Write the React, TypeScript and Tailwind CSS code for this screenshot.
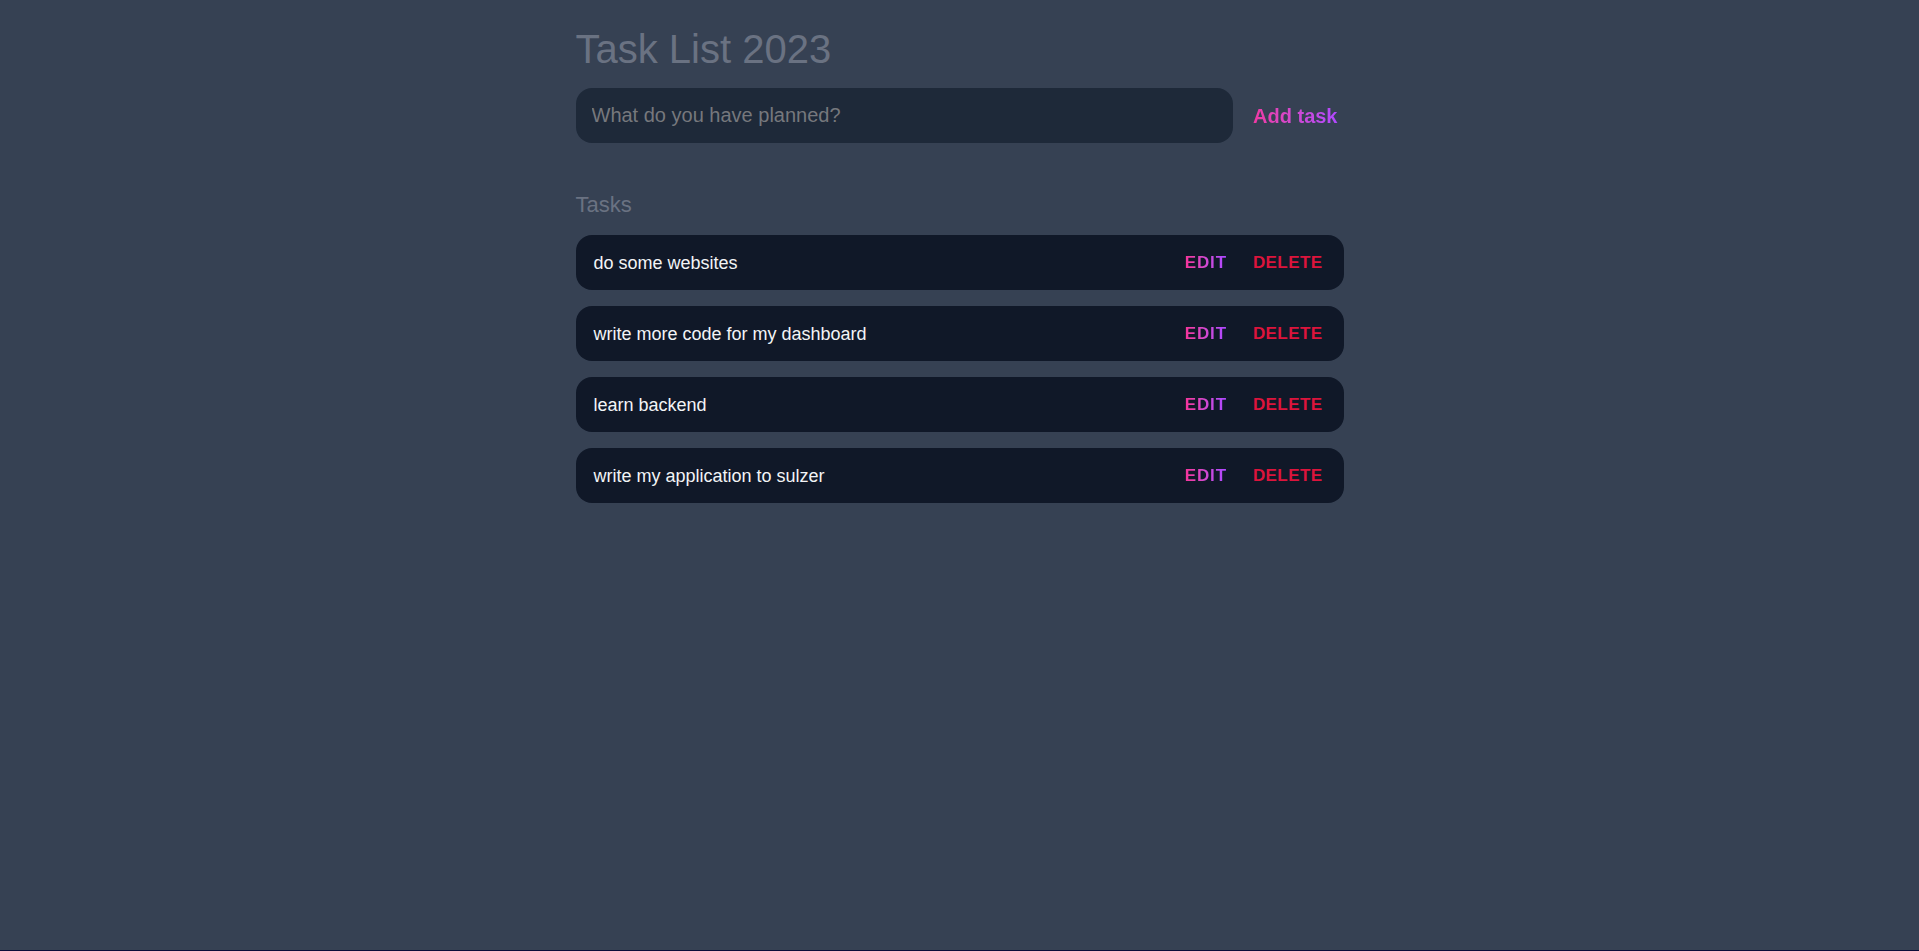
import React, { useState } from 'react';

interface Task {
  id: number;
  text: string;
}

const initialTasks: Task[] = [
  { id: 1, text: 'do some websites' },
  { id: 2, text: 'write more code for my dashboard' },
  { id: 3, text: 'learn backend' },
  { id: 4, text: 'write my application to sulzer' },
];

const gradientText =
  'bg-gradient-to-r from-pink-500 to-purple-500 bg-clip-text text-transparent';

const TaskRow: React.FC<{ task: Task; onDelete: (id: number) => void }> = ({ task, onDelete }) => (
  <div className="flex h-[55px] items-center justify-between rounded-2xl bg-gray-900 pl-[18px] pr-[21px]">
    <span className="text-lg text-gray-100">{task.text}</span>
    <div className="flex items-center gap-[26px]">
      <button className={`text-[17px] font-bold uppercase tracking-wider ${gradientText}`}>Edit</button>
      <button
        className="text-[17px] font-bold uppercase tracking-wide text-[#dc143c]"
        onClick={() => onDelete(task.id)}
      >
        Delete
      </button>
    </div>
  </div>
);

export default function App() {
  const [tasks, setTasks] = useState<Task[]>(initialTasks);
  const [value, setValue] = useState('');

  const addTask = () => {
    if (!value.trim()) return;
    setTasks([...tasks, { id: Date.now(), text: value.trim() }]);
    setValue('');
  };

  return (
    <div className="min-h-[951px] border-b border-[#0b0d38] bg-gray-700 font-['Liberation_Sans',Arial,sans-serif]">
      <div className="mx-auto w-[768px] pt-[29px]">
        <h1 className="mb-[19px] text-[40px] leading-none text-gray-500">Task List 2023</h1>

        {/* new task form */}
        <form
          className="flex items-center gap-3"
          onSubmit={(e) => {
            e.preventDefault();
            addTask();
          }}
        >
          <input
            className="h-[55px] flex-1 rounded-2xl bg-gray-800 px-4 text-xl text-gray-200 outline-none placeholder:text-[#76787d]"
            placeholder="What do you have planned?"
            value={value}
            onChange={(e) => setValue(e.target.value)}
          />
          <button type="submit" className={`pl-2 pr-[6px] text-xl font-bold ${gradientText}`}>
            Add task
          </button>
        </form>

        <h2 className="mt-[51px] mb-[19px] text-[22px] leading-none text-gray-500">Tasks</h2>

        <div className="flex flex-col gap-4">
          {tasks.map((task) => (
            <TaskRow key={task.id} task={task} onDelete={(id) => setTasks(tasks.filter((t) => t.id !== id))} />
          ))}
        </div>
      </div>
    </div>
  );
}
